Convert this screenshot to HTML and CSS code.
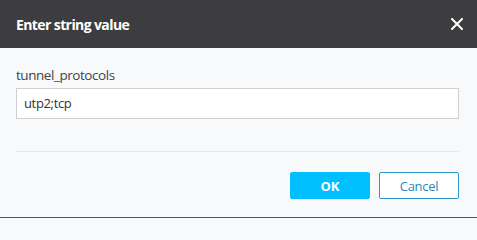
FILE: index.html
```html
<!DOCTYPE html>
<html>
<head>
<meta charset="utf-8">
<link rel="stylesheet" href="styles.css">
</head>
<body>
<div class="dialog">
  <div class="header">
    <span class="title">Enter string value</span>
    <span class="close" aria-label="Close">
      <svg width="12" height="12" viewBox="0 0 12 12"><path d="M1 1L11 11M11 1L1 11" stroke="#fff" stroke-width="2" stroke-linecap="square"/></svg>
    </span>
  </div>
  <div class="body">
    <label class="label">tunnel_protocols</label>
    <div class="input">utp2;tcp</div>
    <div class="divider"></div>
    <div class="actions">
      <button class="btn btn-ok">OK</button>
      <button class="btn btn-cancel">Cancel</button>
    </div>
  </div>
</div>
</body>
</html>
```
FILE: styles.css
```css
html, body {
  margin: 0;
  padding: 0;
  background: #f8f9fb;
}
body {
  font-family: "Open Sans", "Noto Sans", sans-serif;
  width: 477px;
  height: 218px;
  overflow: hidden;
}
.dialog {
  width: 477px;
  height: 218px;
  box-sizing: border-box;
  border-bottom: 1px solid #555;
  display: flex;
  flex-direction: column;
}
.header {
  height: 48px;
  flex: none;
  background: #3d3d3f;
  display: flex;
  align-items: center;
  justify-content: space-between;
  padding: 0 14px 0 16px;
  box-sizing: border-box;
}
.title {
  color: #fff;
  font-weight: 700;
  font-size: 14px;
  letter-spacing: -0.6px;
}
.close {
  display: flex;
  width: 12px;
  height: 12px;
}
.body {
  flex: 1;
  padding: 17px 18px 0 16px;
  display: flex;
  flex-direction: column;
}
.label {
  font-size: 13.5px;
  color: #444;
  line-height: 20px;
  height: 20px;
  letter-spacing: -0.45px;
}
.input {
  margin-top: 3px;
  height: 31px;
  box-sizing: border-box;
  border: 1px solid #cfcfcf;
  background: #fff;
  padding: 0 7px;
  font-size: 13px;
  line-height: 29px;
  color: #333;
  letter-spacing: -0.35px;
}
.divider {
  margin-top: 32px;
  height: 1px;
  background: #e6e7e9;
}
.actions {
  display: flex;
  justify-content: flex-end;
  gap: 9px;
  margin-top: 20px;
}
.btn {
  width: 80px;
  height: 27px;
  box-sizing: border-box;
  border-radius: 2px;
  font-family: "Open Sans", "Noto Sans", sans-serif;
  font-size: 13px;
  padding: 0;
  cursor: pointer;
}
.btn-ok {
  background: #00bfff;
  border: 1px solid #00bfff;
  color: #fff;
  font-weight: 700;
}
.btn-cancel {
  background: #fff;
  border: 1px solid #2b97c6;
  color: #2a86c2;
  letter-spacing: -0.3px;
}
```
